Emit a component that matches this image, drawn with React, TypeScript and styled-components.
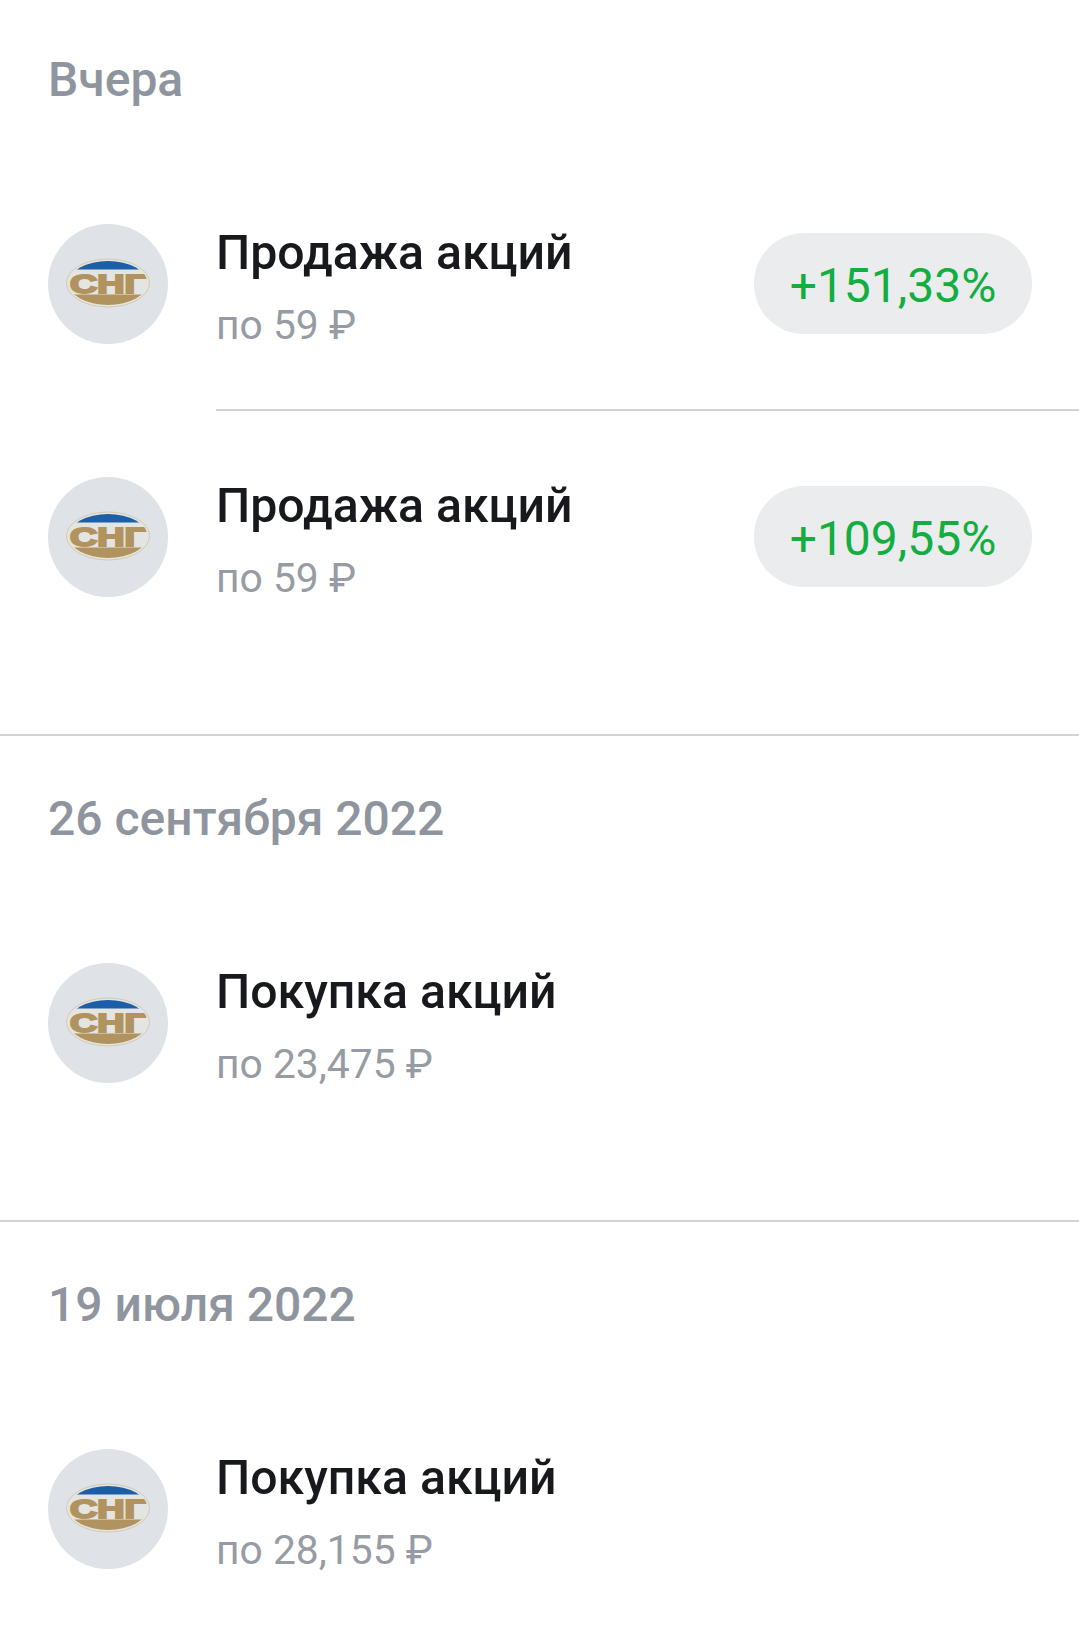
import React from 'react';
import styled, { createGlobalStyle } from 'styled-components';

const GlobalStyle = createGlobalStyle`
  html, body {
    margin: 0;
    padding: 0;
    background: #ffffff;
  }
  body {
    font-family: Roboto, "Liberation Sans", sans-serif;
  }
`;

const Page = styled.div`
  width: 1079px;
  height: 1630px;
  overflow: hidden;
  background: #ffffff;
`;

const Section = styled.section<{ $height: number; $divider?: boolean }>`
  height: ${({ $height }) => $height}px;
  box-sizing: border-box;
  border-bottom: ${({ $divider }) => ($divider ? '2px solid #cfd1d4' : 'none')};
`;

const DateHeading = styled.h2<{ $top: number; $bottom: number }>`
  margin: 0;
  padding: ${({ $top }) => $top}px 48px ${({ $bottom }) => $bottom}px;
  height: 60px;
  font-size: 48px;
  line-height: 60px;
  font-weight: 500;
  color: #8f959e;
`;

const Row = styled.div`
  display: flex;
  align-items: center;
  height: 251px;
  padding: 0 47px 0 48px;
`;

const Avatar = styled.div`
  flex: none;
  display: flex;
  align-items: center;
  justify-content: center;
  width: 120px;
  height: 120px;
  border-radius: 50%;
  background: #dfe2e7;
`;

const Body = styled.div`
  flex: 1;
  margin-left: 49px;
  padding-top: 6px;
`;

const Title = styled.div`
  margin-left: -1px;
  font-size: 48.2px;
  line-height: 60px;
  font-weight: 500;
  color: #17191c;
`;

const Subtitle = styled.div`
  margin-top: 17px;
  margin-left: -1px;
  font-size: 40.8px;
  line-height: 50px;
  color: #979ca4;
`;

const Pill = styled.div`
  flex: none;
  display: flex;
  align-items: center;
  justify-content: center;
  box-sizing: border-box;
  width: 278px;
  height: 101px;
  padding-top: 3px;
  border-radius: 50px;
  background: #ebecee;
  font-size: 48px;
  color: #12ae3f;
`;

const RowDivider = styled.div`
  height: 2px;
  margin-left: 216px;
  background: #cfd1d4;
`;

const LogoGraphic = styled.svg`
  display: block;
  margin-top: -1px;
`;

const SngLogo = ({ id }: { id: string }) => (
  <LogoGraphic width="84" height="50" viewBox="0 0 84 50" aria-hidden="true">
    <ellipse cx="42" cy="25" rx="41.5" ry="24" fill="#e4e4e1" stroke="#d3cab0" strokeWidth="1" />
    <clipPath id={id}>
      <ellipse cx="42" cy="25" rx="39.5" ry="22" />
    </clipPath>
    <g clipPath={`url(#${id})`}>
      <rect x="0" y="0" width="84" height="11.5" fill="#1c5ea8" />
      <rect x="0" y="36.5" width="84" height="14" fill="#b0935e" />
      <text
        x="42"
        y="34.5"
        textAnchor="middle"
        textLength="76"
        lengthAdjust="spacingAndGlyphs"
        fontFamily="'Liberation Sans', sans-serif"
        fontWeight="700"
        fontSize="26"
        fill="#b0935e"
        stroke="#b0935e"
        strokeWidth="2"
      >
        СНГ
      </text>
    </g>
  </LogoGraphic>
);

interface Deal {
  id: string;
  title: string;
  price: string;
  yieldText?: string;
}

const DealRow = ({ id, title, price, yieldText }: Deal) => (
  <Row>
    <Avatar>
      <SngLogo id={id} />
    </Avatar>
    <Body>
      <Title>{title}</Title>
      <Subtitle>{price}</Subtitle>
    </Body>
    {yieldText && <Pill>{yieldText}</Pill>}
  </Row>
);

export default function App() {
  return (
    <Page>
      <GlobalStyle />
      <Section $height={736} $divider>
        <DateHeading $top={50} $bottom={48}>Вчера</DateHeading>
        <DealRow id="sng-1" title="Продажа акций" price="по 59 ₽" yieldText="+151,33%" />
        <RowDivider />
        <DealRow id="sng-2" title="Продажа акций" price="по 59 ₽" yieldText="+109,55%" />
      </Section>
      <Section $height={486} $divider>
        <DateHeading $top={53} $bottom={48}>26 сентября 2022</DateHeading>
        <DealRow id="sng-3" title="Покупка акций" price="по 23,475 ₽" />
      </Section>
      <Section $height={408}>
        <DateHeading $top={53} $bottom={48}>19 июля 2022</DateHeading>
        <DealRow id="sng-4" title="Покупка акций" price="по 28,155 ₽" />
      </Section>
    </Page>
  );
}
